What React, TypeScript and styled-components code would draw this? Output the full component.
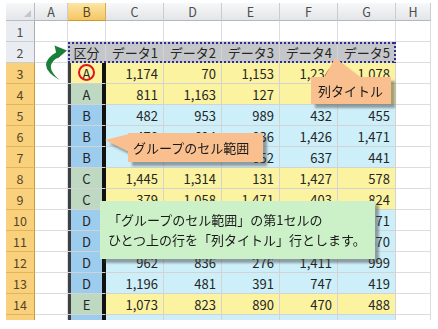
import React from 'react';
import styled, { createGlobalStyle, css } from 'styled-components';

const GlobalStyle = createGlobalStyle`
  html, body { margin: 0; padding: 0; background: #fff; }
  body { font-family: "Noto Sans CJK JP", "Noto Sans", sans-serif; }
  #root { width: 438px; height: 329px; }
`;

type Tone = 'white' | 'gray' | 'yellow' | 'cyan' | 'bgreen' | 'bblue';

const toneBg: Record<Tone, string> = {
  white: '#ffffff',
  gray: '#c5c6c9',
  yellow: '#fcf3a0',
  cyan: '#cdeff9',
  bgreen: '#bfd8c2',
  bblue: '#9dcdee',
};

const Stage = styled.div`
  position: relative;
  width: 438px;
  height: 329px;
  overflow: hidden;
  background: #fff;
  padding: 3px 0 0 6px;
  box-sizing: border-box;
`;

const Sheet = styled.div`
  display: grid;
  grid-template-columns: 29px 33px 38px repeat(5, 58px) 35px;
  grid-template-rows: 18px;
  grid-auto-rows: 21px;
  width: 425px;
  height: 317px;
  overflow: hidden;
  font-size: 13px;
  color: #262626;
`;

const Corner = styled.div`
  position: relative;
  box-sizing: border-box;
  background: linear-gradient(#f6f7f8, #e4e6e9);
  border-right: 1px solid #b9bdc3;
  border-bottom: 1px solid #b9bdc3;
  &::after {
    content: '';
    position: absolute;
    right: 3px;
    bottom: 3px;
    width: 7px;
    height: 7px;
    background: #c3c7cc;
    clip-path: polygon(100% 0, 100% 100%, 0 100%);
  }
`;

const ColHead = styled.div<{ $active?: boolean }>`
  box-sizing: border-box;
  display: flex;
  align-items: center;
  justify-content: center;
  font-size: 12.5px;
  color: #4d4d4d;
  background: linear-gradient(#f7f8f9, #e3e5e8);
  border-right: 1px solid #c9ccd1;
  border-bottom: 1px solid #b3b8bf;
  ${(p) =>
    p.$active &&
    css`
      background: linear-gradient(#fbe5a6, #f5c764);
      border-right-color: #d8aa50;
      border-bottom-color: #c99838;
      color: #5a4520;
    `}
`;

const RowHead = styled.div<{ $active?: boolean }>`
  box-sizing: border-box;
  display: flex;
  align-items: center;
  justify-content: center;
  font-size: 12.5px;
  color: #4d4d4d;
  background: #e9ecf0;
  border-right: 1px solid #a9aeb5;
  border-bottom: 1px solid #c9ccd1;
  ${(p) =>
    p.$active &&
    css`
      background: #f9d17c;
      border-right-color: #c99838;
      border-bottom-color: #e2b55c;
      color: #574528;
    `}
`;

const Cell = styled.div<{ $tone: Tone; $align?: 'left' | 'center' | 'right'; $framed?: boolean }>`
  box-sizing: border-box;
  display: flex;
  align-items: center;
  white-space: nowrap;
  overflow: hidden;
  padding: 0 5px;
  justify-content: ${(p) =>
    p.$align === 'right' ? 'flex-end' : p.$align === 'center' ? 'center' : 'flex-start'};
  background: ${(p) => toneBg[p.$tone]};
  border-right: 1px solid ${(p) => (p.$tone === 'white' ? '#dadcdf' : '#d3d3d3')};
  border-bottom: 1px solid ${(p) => (p.$tone === 'white' ? '#dadcdf' : '#d3d3d3')};
  ${(p) =>
    p.$framed &&
    css`
      box-shadow: inset 3px 0 0 #3d3f42, inset -3px 0 0 #111;
      border-right-color: #111;
    `}
`;

const Ants = styled.div`
  position: absolute;
  left: 68px;
  top: 42px;
  width: 328px;
  height: 21px;
  box-sizing: border-box;
  pointer-events: none;
  background:
    repeating-linear-gradient(90deg, #2c2c8c 0 2px, transparent 2px 4px) left top / 100% 2px no-repeat,
    repeating-linear-gradient(90deg, #2c2c8c 0 2px, transparent 2px 4px) left bottom / 100% 2px no-repeat,
    repeating-linear-gradient(180deg, #2c2c8c 0 2px, transparent 2px 4px) left top / 2px 100% no-repeat,
    repeating-linear-gradient(180deg, #2c2c8c 0 2px, transparent 2px 4px) right top / 2px 100% no-repeat;
`;

const ArrowSvg = styled.svg`
  position: absolute;
  left: 0;
  top: 0;
  width: 80px;
  height: 90px;
  pointer-events: none;
`;

const Ring = styled.div`
  position: absolute;
  left: 78px;
  top: 64px;
  width: 17px;
  height: 17px;
  box-sizing: border-box;
  border: 2px solid #e0141c;
  border-radius: 50%;
`;

const Callout = styled.div<{ $left: number; $top: number; $w: number; $h: number }>`
  position: absolute;
  left: ${(p) => p.$left}px;
  top: ${(p) => p.$top}px;
  width: ${(p) => p.$w}px;
  height: ${(p) => p.$h}px;
  filter: drop-shadow(4px 4px 1px rgba(60, 60, 60, 0.45));
`;

const Box = styled.div<{ $bg: string; $pad: string }>`
  position: relative;
  box-sizing: border-box;
  width: 100%;
  height: 100%;
  background: ${(p) => p.$bg};
  padding: ${(p) => p.$pad};
  font-size: 13px;
  line-height: 20px;
  color: #1a1a1a;
  white-space: nowrap;
  display: flex;
  flex-direction: column;
  justify-content: center;
`;

const Pointer = styled.div<{ $bg: string; $left: number; $top: number; $w: number; $h: number; $clip: string }>`
  position: absolute;
  left: ${(p) => p.$left}px;
  top: ${(p) => p.$top}px;
  width: ${(p) => p.$w}px;
  height: ${(p) => p.$h}px;
  background: ${(p) => p.$bg};
  clip-path: ${(p) => p.$clip};
`;

const headers = ['区分', 'データ1', 'データ2', 'データ3', 'データ4', 'データ5'];

type Row = { n: number; g: string; b: Tone; t: Tone; v: string[] };

const rows: Row[] = [
  { n: 3, g: 'A', b: 'yellow', t: 'yellow', v: ['1,174', '70', '1,153', '1,234', '1,078'] },
  { n: 4, g: 'A', b: 'bgreen', t: 'yellow', v: ['811', '1,163', '127', '', ''] },
  { n: 5, g: 'B', b: 'bblue', t: 'cyan', v: ['482', '953', '989', '432', '455'] },
  { n: 6, g: 'B', b: 'bblue', t: 'cyan', v: ['478', '694', '836', '1,426', '1,471'] },
  { n: 7, g: 'B', b: 'bblue', t: 'cyan', v: ['', '', '652', '637', '441'] },
  { n: 8, g: 'C', b: 'bgreen', t: 'yellow', v: ['1,445', '1,314', '131', '1,427', '578'] },
  { n: 9, g: 'C', b: 'bgreen', t: 'yellow', v: ['379', '1,058', '1,471', '403', '824'] },
  { n: 10, g: 'D', b: 'bblue', t: 'cyan', v: ['', '', '', '', '971'] },
  { n: 11, g: 'D', b: 'bblue', t: 'cyan', v: ['', '', '', '', '670'] },
  { n: 12, g: 'D', b: 'bblue', t: 'cyan', v: ['962', '836', '276', '1,411', '999'] },
  { n: 13, g: 'D', b: 'bblue', t: 'cyan', v: ['1,196', '481', '391', '747', '419'] },
  { n: 14, g: 'E', b: 'bgreen', t: 'yellow', v: ['1,073', '823', '890', '470', '488'] },
  { n: 15, g: '', b: 'bblue', t: 'cyan', v: ['', '', '', '', ''] },
];

const cols = ['A', 'B', 'C', 'D', 'E', 'F', 'G', 'H'];

export default function App() {
  return (
    <>
      <GlobalStyle />
      <Stage>
        <Sheet>
          <Corner />
          {cols.map((c) => (
            <ColHead key={c} $active={c === 'B'}>
              {c}
            </ColHead>
          ))}

          <RowHead>1</RowHead>
          {cols.map((c) => (
            <Cell key={'r1' + c} $tone="white" />
          ))}

          <RowHead>2</RowHead>
          <Cell $tone="white" />
          {headers.map((h, i) => (
            <Cell key={h} $tone="gray" $align={i === 0 ? 'center' : 'right'}>
              {h}
            </Cell>
          ))}
          <Cell $tone="white" />

          {rows.map((r) => (
            <React.Fragment key={r.n}>
              <RowHead $active>{r.n < 15 ? r.n : ''}</RowHead>
              <Cell $tone="white" />
              <Cell $tone={r.b} $align="center" $framed>
                {r.g}
              </Cell>
              {r.v.map((v, i) => (
                <Cell key={i} $tone={r.t} $align="right">
                  {v}
                </Cell>
              ))}
              <Cell $tone="white" />
            </React.Fragment>
          ))}
        </Sheet>

        <Ants />

        <ArrowSvg viewBox="0 0 80 90">
          <path d="M57.5 51.5 Q33.5 65 59.5 80 Q42 65 60 56.5 Z" fill="#1b7f3a" />
          <polygon points="54.5,45.5 67,50.5 57.5,58.5" fill="#1b7f3a" />
        </ArrowSvg>

        <Ring />

        <Callout $left={311} $top={77} $w={80} $h={27}>
          <Pointer
            $bg="#fabf8f"
            $left={13}
            $top={-19}
            $w={37}
            $h={20}
            $clip="polygon(11px 0, 0 100%, 100% 100%)"
          />
          <Box $bg="#fabf8f" $pad="0 0 0 7px">
            列タイトル
          </Box>
        </Callout>

        <Callout $left={128} $top={133} $w={135} $h={29}>
          <Pointer
            $bg="#fabf8f"
            $left={-23}
            $top={1}
            $w={24}
            $h={18}
            $clip="polygon(0 6px, 100% 0, 100% 100%)"
          />
          <Box $bg="#fabf8f" $pad="0 0 0 5px">
            グループのセル範囲
          </Box>
        </Callout>

        <Callout $left={100} $top={201} $w={275} $h={58}>
          <Box $bg="#ccf1c8" $pad="0 0 0 8px">
            <span>「グループのセル範囲」の第1セルの</span>
            <span>ひとつ上の行を「列タイトル」行とします。</span>
          </Box>
        </Callout>
      </Stage>
    </>
  );
}
